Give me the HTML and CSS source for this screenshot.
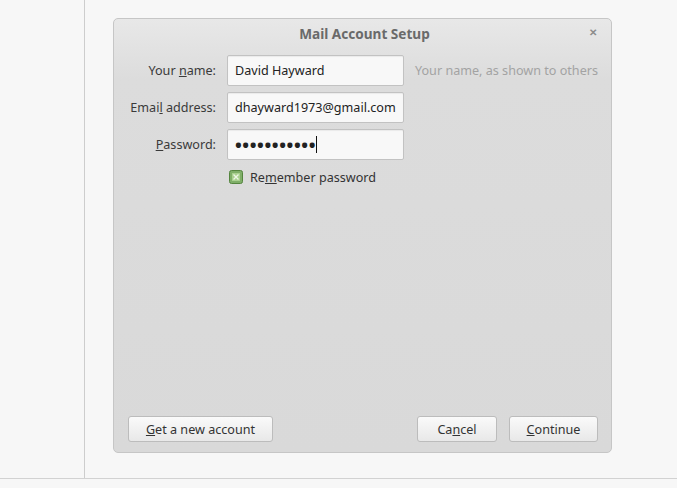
FILE: index.html
```html
<!DOCTYPE html>
<html lang="en">
<head>
    <meta charset="UTF-8">
    <meta name="viewport" content="width=device-width, initial-scale=1.0">
    <title>Mail Account Setup</title>
    <link rel="stylesheet" href="styles.css">
</head>
<body>

<div class="page">
    <div class="sidebar"></div>
    <div class="main">
        <div class="dialog">
            <div class="titlebar">
                <span class="title">Mail Account Setup</span>
                <span class="close">&#x2715;</span>
            </div>

            <div class="form">
                <label class="label">Your <u>n</u>ame:</label>
                <div class="field">David Hayward</div>
                <span class="hint">Your name, as shown to others</span>

                <label class="label">Emai<u>l</u> address:</label>
                <div class="field">dhayward1973@gmail.com</div>
                <span></span>

                <label class="label"><u>P</u>assword:</label>
                <div class="field"><span class="dots">&bull;&bull;&bull;&bull;&bull;&bull;&bull;&bull;&bull;&bull;&bull;</span><span class="caret"></span></div>
                <span></span>

                <span></span>
                <div class="remember">
                    <svg class="check" width="14" height="14" viewBox="0 0 14 14">
                        <rect x="0.5" y="0.5" width="13" height="13" rx="2" fill="#7fae68" stroke="#55853f"/>
                        <rect x="3" y="3" width="8" height="8" fill="#a9d08f"/>
                        <path d="M4.5 4.5 L9.5 9.5 M9.5 4.5 L4.5 9.5" stroke="#eef6e6" stroke-width="1.4"/>
                    </svg>
                    <span>Re<u>m</u>ember password</span>
                </div>
                <span></span>
            </div>

            <div class="footer">
                <button type="button" class="new"><u>G</u>et a new account</button>
                <div class="actions">
                    <button type="button" class="cancel">Ca<u>n</u>cel</button>
                    <button type="button" class="continue"><u>C</u>ontinue</button>
                </div>
            </div>
        </div>
    </div>
</div>

</body>
</html>
```

FILE: styles.css
```css
body {
    margin: 0;
    background-color: #f7f7f7;
    font-family: "Noto Sans", "Open Sans", sans-serif;
    font-size: 12.6px;
    color: #333;
}
.page {
    display: flex;
    height: 478px;
    border-bottom: 1px solid #d2d2d2;
}
.sidebar {
    width: 84px;
    border-right: 1px solid #cdcdcd;
}
.main {
    flex: 1;
    padding: 18px 0 0 28px;
}
.dialog {
    width: 497px;
    height: 433px;
    border: 1px solid #c6c6c6;
    border-radius: 5px;
    background: linear-gradient(#e8e8e8, #dcdcdc 60px, #d9d9d9);
    display: flex;
    flex-direction: column;
}
.titlebar {
    height: 28px;
    display: flex;
    align-items: center;
    justify-content: center;
    position: relative;
}
.title {
    font-weight: bold;
    color: #6a6a6a;
    font-size: 13.6px;
    margin-left: 4px;
}
.close {
    position: absolute;
    right: 14px;
    top: 6px;
    font-size: 10px;
    color: #8c8c8c;
    font-weight: bold;
}
.form {
    flex: 1;
    display: grid;
    grid-template-columns: 102px 177px auto;
    grid-auto-rows: 31px;
    column-gap: 11px;
    row-gap: 6px;
    padding-top: 8px;
    align-items: center;
}
.label {
    text-align: right;
    color: #3a3a3a;
}
.field {
    height: 31px;
    box-sizing: border-box;
    border: 1px solid #c2c2c2;
    border-radius: 2px;
    background-color: #f8f8f8;
    box-shadow: inset 0 1px 1px rgba(0, 0, 0, 0.06);
    padding: 0 7px;
    display: flex;
    align-items: center;
    color: #222;
    white-space: nowrap;
}
.hint {
    color: #a3a3a3;
    white-space: nowrap;
}
.dots {
    font-size: 18px;
    font-weight: bold;
    letter-spacing: 0.6px;
    color: #222;
}
.caret {
    width: 1px;
    height: 17px;
    background-color: #111;
}
.remember {
    display: flex;
    align-items: center;
    gap: 7px;
    padding-left: 2px;
    margin-top: -9px;
    color: #333;
    white-space: nowrap;
}
.footer {
    display: flex;
    justify-content: space-between;
    padding: 0 13px 10px 14px;
}
.actions {
    display: flex;
    gap: 12px;
}
button {
    font-family: "Noto Sans", "Open Sans", sans-serif;
    font-size: 12.6px;
    color: #333;
    height: 26px;
    padding: 0 16px;
    border: 1px solid #bcbcbc;
    border-radius: 3px;
    background: linear-gradient(#fafafa, #e8e8e8);
}
.new {
    width: 145px;
}
.cancel {
    width: 80px;
}
.continue {
    width: 89px;
}
```
